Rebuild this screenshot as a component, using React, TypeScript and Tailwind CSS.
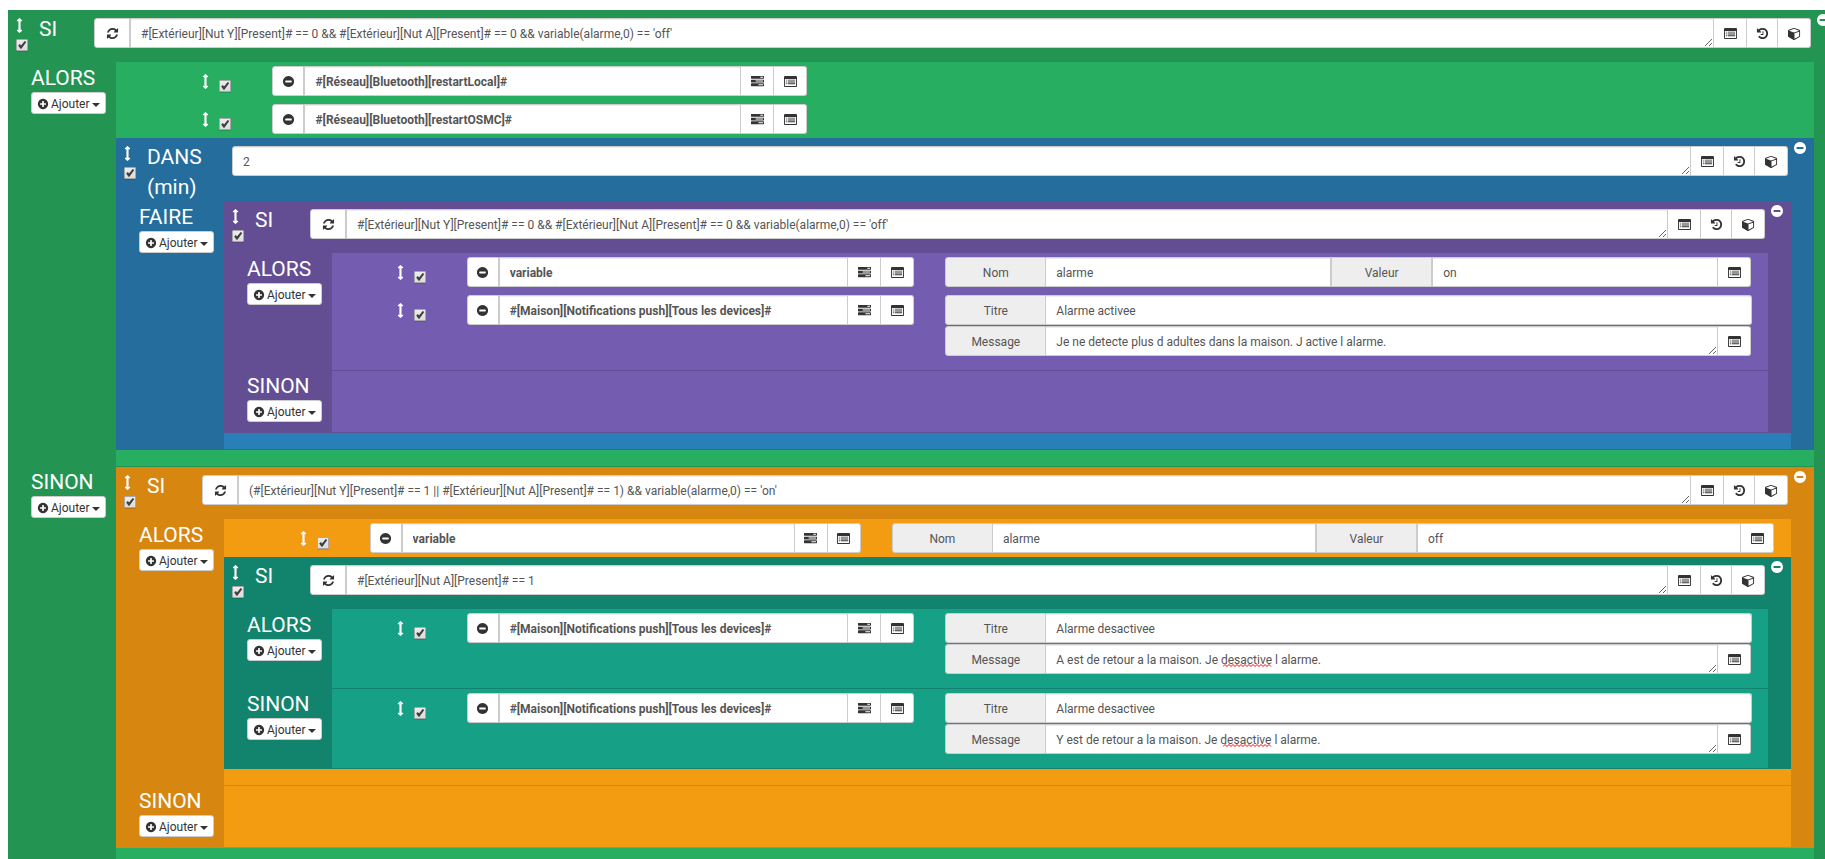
import { useId, type ReactNode } from "react";

/* ---------- icons ---------- */

const PATHS = {
  arrowsV:
    "M1216 320q0 26-19 45t-45 19h-128v1024h128q26 0 45 19t19 45-19 45l-256 256q-19 19-45 19t-45-19l-256-256q-19-19-19-45t19-45 45-19h128v-1024h-128q-26 0-45-19t-19-45 19-45l256-256q19-19 45-19t45 19l256 256q19 19 19 45z",
  refresh:
    "M1639 1056q0 5-1 7-64 268-268 434.5t-478 166.5q-146 0-282.5-55t-243.5-157l-129 129q-19 19-45 19t-45-19-19-45v-448q0-26 19-45t45-19h448q26 0 45 19t19 45-19 45l-137 137q71 66 161 102t187 36q134 0 250-65t186-179q11-17 53-117 8-23 30-23h192q13 0 22.5 9.5t9.5 22.5zm25-800v448q0 26-19 45t-45 19h-448q-26 0-45-19t-19-45 19-45l138-138q-148-137-349-137-134 0-250 65t-186 179q-11 17-53 117-8 23-30 23h-199q-13 0-22.5-9.5t-9.5-22.5v-7q65-268 270-434.5t480-166.5q146 0 284 55.5t245 156.5l130-129q19-19 45-19t45 19 19 45z",
  history:
    "M1664 896q0 156-61 298t-164 245-245 164-298 61q-172 0-327-72.5t-264-204.5q-7-10-6.5-22.5t8.5-20.5l137-138q10-9 25-9 16 2 23 12 73 95 179 147t225 52q104 0 198.5-40.5t163.5-109.5 109.5-163.5 40.5-198.5-40.5-198.5-109.5-163.5-163.5-109.5-198.5-40.5q-98 0-188 35.5t-160 101.5l137 138q31 30 14 69-17 40-59 40h-448q-26 0-45-19t-19-45v-448q0-42 40-59 39-17 69 14l130 129q107-101 244.5-156.5t284.5-55.5q156 0 298 61t245 164 164 245 61 298zm-640-288v448q0 14-9 23t-23 9h-320q-14 0-23-9t-9-23v-64q0-14 9-23t23-9h224v-352q0-14 9-23t23-9h64q14 0 23 9t9 23z",
  cube:
    "M896 1629l640-349v-636l-640 233v752zm-64-865l698-254-698-254-698 254 698 254zm832-252v768q0 35-18 65t-49 47l-704 384q-28 16-61 16t-61-16l-704-384q-31-17-49-47t-18-65v-768q0-40 23-73t61-47l704-256q22-8 44-8t44 8l704 256q38 14 61 47t23 73z",
  plusCircle:
    "M1344 960v-128q0-26-19-45t-45-19h-256v-256q0-26-19-45t-45-19h-128q-26 0-45 19t-19 45v256h-256q-26 0-45 19t-19 45v128q0 26 19 45t45 19h256v256q0 26 19 45t45 19h128q26 0 45-19t19-45v-256h256q26 0 45-19t19-45zm320-64q0 209-103 385.5t-279.5 279.5-385.5 103-385.5-103-279.5-279.5-103-385.5 103-385.5 279.5-279.5 385.5-103 385.5 103 279.5 279.5 103 385.5z",
  minusCircle:
    "M1344 960v-128q0-26-19-45t-45-19h-768q-26 0-45 19t-19 45v128q0 26 19 45t45 19h768q26 0 45-19t19-45zm320-64q0 209-103 385.5t-279.5 279.5-385.5 103-385.5-103-279.5-279.5-103-385.5 103-385.5 279.5-279.5 385.5-103 385.5 103 279.5 279.5 103 385.5z",
  tasks:
    "M1024 1408h640v-128h-640v128zm-384-512h1024v-128h-1024v128zm640-512h384v-128h-384v128zm512 832v256q0 26-19 45t-45 19h-1664q-26 0-45-19t-19-45v-256q0-26 19-45t45-19h1664q26 0 45 19t19 45zm0-512v256q0 26-19 45t-45 19h-1664q-26 0-45-19t-19-45v-256q0-26 19-45t45-19h1664q26 0 45 19t19 45zm0-512v256q0 26-19 45t-45 19h-1664q-26 0-45-19t-19-45v-256q0-26 19-45t45-19h1664q26 0 45 19t19 45z",
  listAlt:
    "M160 128h1472q66 0 113 47t47 113v1216q0 66-47 113t-113 47h-1472q-66 0-113-47t-47-113v-1216q0-66 47-113t113-47zM128 540v932q0 32 32 32h1472q32 0 32-32v-932zM256 640h128v128h-128zM512 640h1024v128h-1024zM256 896h128v128h-128zM512 896h1024v128h-1024zM256 1152h128v128h-128zM512 1152h1024v128h-1024z",
};

function Icon({ name, className = "size-[13px]" }: { name: keyof typeof PATHS; className?: string }) {
  return (
    <svg viewBox="0 0 1792 1792" fill="currentColor" fillRule={name === "listAlt" ? "evenodd" : "nonzero"} className={`shrink-0 ${className}`} aria-hidden="true">
      <path d={PATHS[name]} />
    </svg>
  );
}

function DragHandle() {
  return (
    <svg viewBox="480 0 832 1792" fill="currentColor" className="h-[15px] w-[7px] shrink-0 cursor-move" aria-hidden="true">
      <path d={PATHS.arrowsV} />
    </svg>
  );
}

/* ---------- controls ---------- */

function Check({ label }: { label: string }) {
  return (
    <span className="relative block size-3 shrink-0">
      <input
        type="checkbox"
        defaultChecked
        aria-label={label}
        className="peer block size-3 appearance-none rounded-[1px] border border-[#a8a8a8] bg-linear-to-b from-[#ededed] to-[#dcdcdc] shadow-[0_1px_0_rgba(0,0,0,0.12)]"
      />
      <svg viewBox="0 0 12 12" className="pointer-events-none absolute inset-0 hidden size-3 peer-checked:block" aria-hidden="true">
        <path d="M2.2 6.4 3.9 5.1 5 6.6 8.7 1.9 10.3 3.1 5.4 9.8 4.5 9.8Z" fill="#3f3f3f" />
      </svg>
    </span>
  );
}

const BTN = "flex h-[30px] shrink-0 items-center justify-center border border-[#ccc] bg-white text-[#333]";
const FIELD =
  "block h-[30px] min-w-0 flex-1 border border-[#ccc] bg-white px-2.5 text-xs text-[#555] shadow-[inset_0_1px_1px_rgba(0,0,0,0.075)] outline-none";
const LINE_FIELD = "pt-px";
const AREA_FIELD = "overflow-hidden pt-1.5 pb-1 leading-[18px]";

function GroupButton({ icon, label, className }: { icon: keyof typeof PATHS; label: string; className: string }) {
  return (
    <button type="button" aria-label={label} className={`${BTN} ${className}`}>
      <Icon name={icon} />
    </button>
  );
}

function AddButton() {
  return (
    <button
      type="button"
      className="mb-2.5 flex h-[22px] items-center gap-0.5 rounded-[3px] border border-[#ccc] bg-white px-[5px] pt-px text-xs text-[#333]"
    >
      <Icon name="plusCircle" className="size-3" />
      Ajouter
      <svg viewBox="0 0 8 4" className="mt-0.5 h-1 w-2" fill="currentColor" aria-hidden="true">
        <path d="M0 0h8L4 4z" />
      </svg>
    </button>
  );
}

/* ---------- action rows ---------- */

function Action({ name, children }: { name: string; children?: ReactNode }) {
  return (
    <div className="flex items-start py-1">
      <div className="flex w-1/12 shrink-0 items-start justify-end gap-2.5 pr-[26px]">
        <span className="pt-2">
          <DragHandle />
        </span>
        <span className="pt-3.5">
          <Check label="Activer l'action" />
        </span>
      </div>
      <div className="flex w-1/3 shrink-0 pr-4 pl-[15px]">
        <GroupButton icon="minusCircle" label="Supprimer l'action" className="w-8 rounded-l-[3px]" />
        <input type="text" aria-label="Action" defaultValue={name} className={`${FIELD} ${LINE_FIELD} font-bold`} />
        <GroupButton icon="tasks" label="Choisir un mot-clé" className="w-[33px] border-l-0" />
        <GroupButton icon="listAlt" label="Choisir une commande" className="w-[33px] rounded-r-[3px] border-l-0" />
      </div>
      <div className="flex min-w-0 flex-1 flex-col gap-px pr-4 pl-[15px]">{children}</div>
    </div>
  );
}

function Addon({ htmlFor, className, children }: { htmlFor: string; className?: string; children: ReactNode }) {
  return (
    <label
      htmlFor={htmlFor}
      className={`flex h-[30px] w-[101px] shrink-0 items-center justify-center border border-[#ccc] bg-[#eee] pt-px text-xs text-[#555] ${className ?? ""}`}
    >
      {children}
    </label>
  );
}

function VariableOptions({ nom, valeur }: { nom: string; valeur: string }) {
  const id = useId();
  return (
    <div className="mr-px flex">
      <Addon htmlFor={`${id}n`} className="rounded-l-[3px]">Nom</Addon>
      <input id={`${id}n`} type="text" defaultValue={nom} className={`${FIELD} ${LINE_FIELD} border-l-0`} />
      <Addon htmlFor={`${id}v`}>Valeur</Addon>
      <input id={`${id}v`} type="text" defaultValue={valeur} className={`${FIELD} ${LINE_FIELD}`} />
      <GroupButton icon="listAlt" label="Choisir une commande" className="w-[33px] rounded-r-[3px] border-l-0" />
    </div>
  );
}

function SpellingMark() {
  return (
    <svg width="49" height="3" className="pointer-events-none absolute top-5 left-[177px]" aria-hidden="true">
      <path
        d={"M0 2.5 " + Array.from({ length: 12 }, (_, i) => `L${i * 4 + 2} 0.5 L${i * 4 + 4} 2.5`).join(" ")}
        fill="none"
        stroke="#f00"
        strokeWidth="1"
      />
    </svg>
  );
}

function MessageOptions({ titre, message, misspelled }: { titre: string; message: string; misspelled?: boolean }) {
  const id = useId();
  return (
    <>
      <div className="flex">
        <Addon htmlFor={`${id}t`} className="rounded-l-[3px]">Titre</Addon>
        <input id={`${id}t`} type="text" defaultValue={titre} className={`${FIELD} ${LINE_FIELD} rounded-r-[3px] border-l-0`} />
      </div>
      <div className="mr-px flex">
        <Addon htmlFor={`${id}m`} className="rounded-l-[3px]">Message</Addon>
        <div className="relative flex min-w-0 flex-1">
          <textarea id={`${id}m`} rows={1} spellCheck={false} defaultValue={message} className={`${FIELD} ${AREA_FIELD} border-l-0`} />
          {misspelled && <SpellingMark />}
        </div>
        <GroupButton icon="listAlt" label="Choisir une commande" className="w-[33px] rounded-r-[3px] border-l-0" />
      </div>
    </>
  );
}

/* ---------- blocks ---------- */

type Theme = { dark: string; light: string; line: string };

const GREEN: Theme = { dark: "bg-[#239452]", light: "bg-[#27ae60]", line: "border-[#239452]" };
const BLUE: Theme = { dark: "bg-[#246d9d]", light: "bg-[#2980b9]", line: "border-[#246d9d]" };
const PURPLE: Theme = { dark: "bg-[#634e94]", light: "bg-[#745cb0]", line: "border-[#634e94]" };
const ORANGE: Theme = { dark: "bg-[#d78610]", light: "bg-[#f39c12]", line: "border-[#d78610]" };
const TEAL: Theme = { dark: "bg-[#12836c]", light: "bg-[#16a085]", line: "border-[#12836c]" };

function Section({ label, theme, ruled = false, children }: { label: string; theme: Theme; ruled?: boolean; children?: ReactNode }) {
  return (
    <section className="flex">
      <div className="w-[108px] shrink-0 pl-[23px]">
        <h3 className="pt-0.5 text-[21px] leading-7">{label}</h3>
        <AddButton />
      </div>
      <div className={`mr-[23px] min-w-0 flex-1 pb-2.5 ${theme.light} ${theme.line} ${ruled ? "border-t" : ""}`}>{children}</div>
    </section>
  );
}

function Block({
  title,
  wide = false,
  value,
  theme,
  className = "mb-1.5",
  children,
}: {
  title: string;
  wide?: boolean;
  value: string;
  theme: Theme;
  className?: string;
  children: ReactNode;
}) {
  return (
    <article className={`border-b ${theme.dark} ${theme.line} ${className}`}>
      <header className="flex items-start">
        <div className="flex w-[31px] shrink-0 flex-col items-start gap-1.5 pt-2 pl-2">
          <DragHandle />
          <Check label="Activer le bloc" />
        </div>
        <h2 className={`-mb-px shrink-0 pt-1 text-[21px] leading-[30px] ${wide ? "w-[85px] pr-5" : "w-[55px]"}`}>{title}</h2>
        <div className="flex min-w-0 flex-1 pt-2 pb-3.5">
          {!wide && <GroupButton icon="refresh" label="Répétition" className="w-9 rounded-l-[3px]" />}
          <textarea
            rows={1}
            spellCheck={false}
            aria-label={title}
            defaultValue={value}
            className={`${FIELD} ${AREA_FIELD} ${wide ? "rounded-l-[3px]" : ""}`}
          />
          <GroupButton icon="listAlt" label="Choisir une commande" className="w-[33px] border-l-0" />
          <GroupButton icon="history" label="Choisir un scénario" className="w-[31px] border-l-0" />
          <GroupButton icon="cube" label="Choisir un équipement" className="w-[33px] rounded-r-[3px] border-l-0" />
        </div>
        <button type="button" aria-label="Supprimer le bloc" className="flex w-[26px] shrink-0 justify-end pt-[3px] pr-[7px] text-white">
          <Icon name="minusCircle" className="size-3.5" />
        </button>
      </header>
      {children}
    </article>
  );
}

const ABSENT = "#[Extérieur][Nut Y][Present]# == 0 && #[Extérieur][Nut A][Present]# == 0 && variable(alarme,0) == 'off'";
const PUSH = "#[Maison][Notifications push][Tous les devices]#";

export default function App() {
  return (
    <main className="overflow-x-hidden bg-white pt-2.5 pl-2 font-[Roboto,'Liberation_Sans',sans-serif] text-white">
      <Block title="SI" value={ABSENT} theme={GREEN} className="-mr-3">
        <Section label="ALORS" theme={GREEN}>
          <Action name="#[Réseau][Bluetooth][restartLocal]#" />
          <Action name="#[Réseau][Bluetooth][restartOSMC]#" />
          <Block title="DANS (min)" wide value="2" theme={BLUE}>
            <Section label="FAIRE" theme={BLUE}>
              <Block title="SI" value={ABSENT} theme={PURPLE}>
                <Section label="ALORS" theme={PURPLE}>
                  <Action name="variable">
                    <VariableOptions nom="alarme" valeur="on" />
                  </Action>
                  <Action name={PUSH}>
                    <MessageOptions titre="Alarme activee" message="Je ne detecte plus d adultes dans la maison. J active l alarme." />
                  </Action>
                </Section>
                <Section label="SINON" theme={PURPLE} ruled />
              </Block>
            </Section>
          </Block>
        </Section>
        <Section label="SINON" theme={GREEN} ruled>
          <Block
            title="SI"
            value="(#[Extérieur][Nut Y][Present]# == 1 || #[Extérieur][Nut A][Present]# == 1) && variable(alarme,0) == 'on'"
            theme={ORANGE}
          >
            <Section label="ALORS" theme={ORANGE}>
              <Action name="variable">
                <VariableOptions nom="alarme" valeur="off" />
              </Action>
              <Block title="SI" value="#[Extérieur][Nut A][Present]# == 1" theme={TEAL}>
                <Section label="ALORS" theme={TEAL}>
                  <Action name={PUSH}>
                    <MessageOptions titre="Alarme desactivee" message="A est de retour a la maison. Je desactive l alarme." misspelled />
                  </Action>
                </Section>
                <Section label="SINON" theme={TEAL} ruled>
                  <Action name={PUSH}>
                    <MessageOptions titre="Alarme desactivee" message="Y est de retour a la maison. Je desactive l alarme." misspelled />
                  </Action>
                </Section>
              </Block>
            </Section>
            <Section label="SINON" theme={ORANGE} ruled />
          </Block>
        </Section>
      </Block>
    </main>
  );
}
